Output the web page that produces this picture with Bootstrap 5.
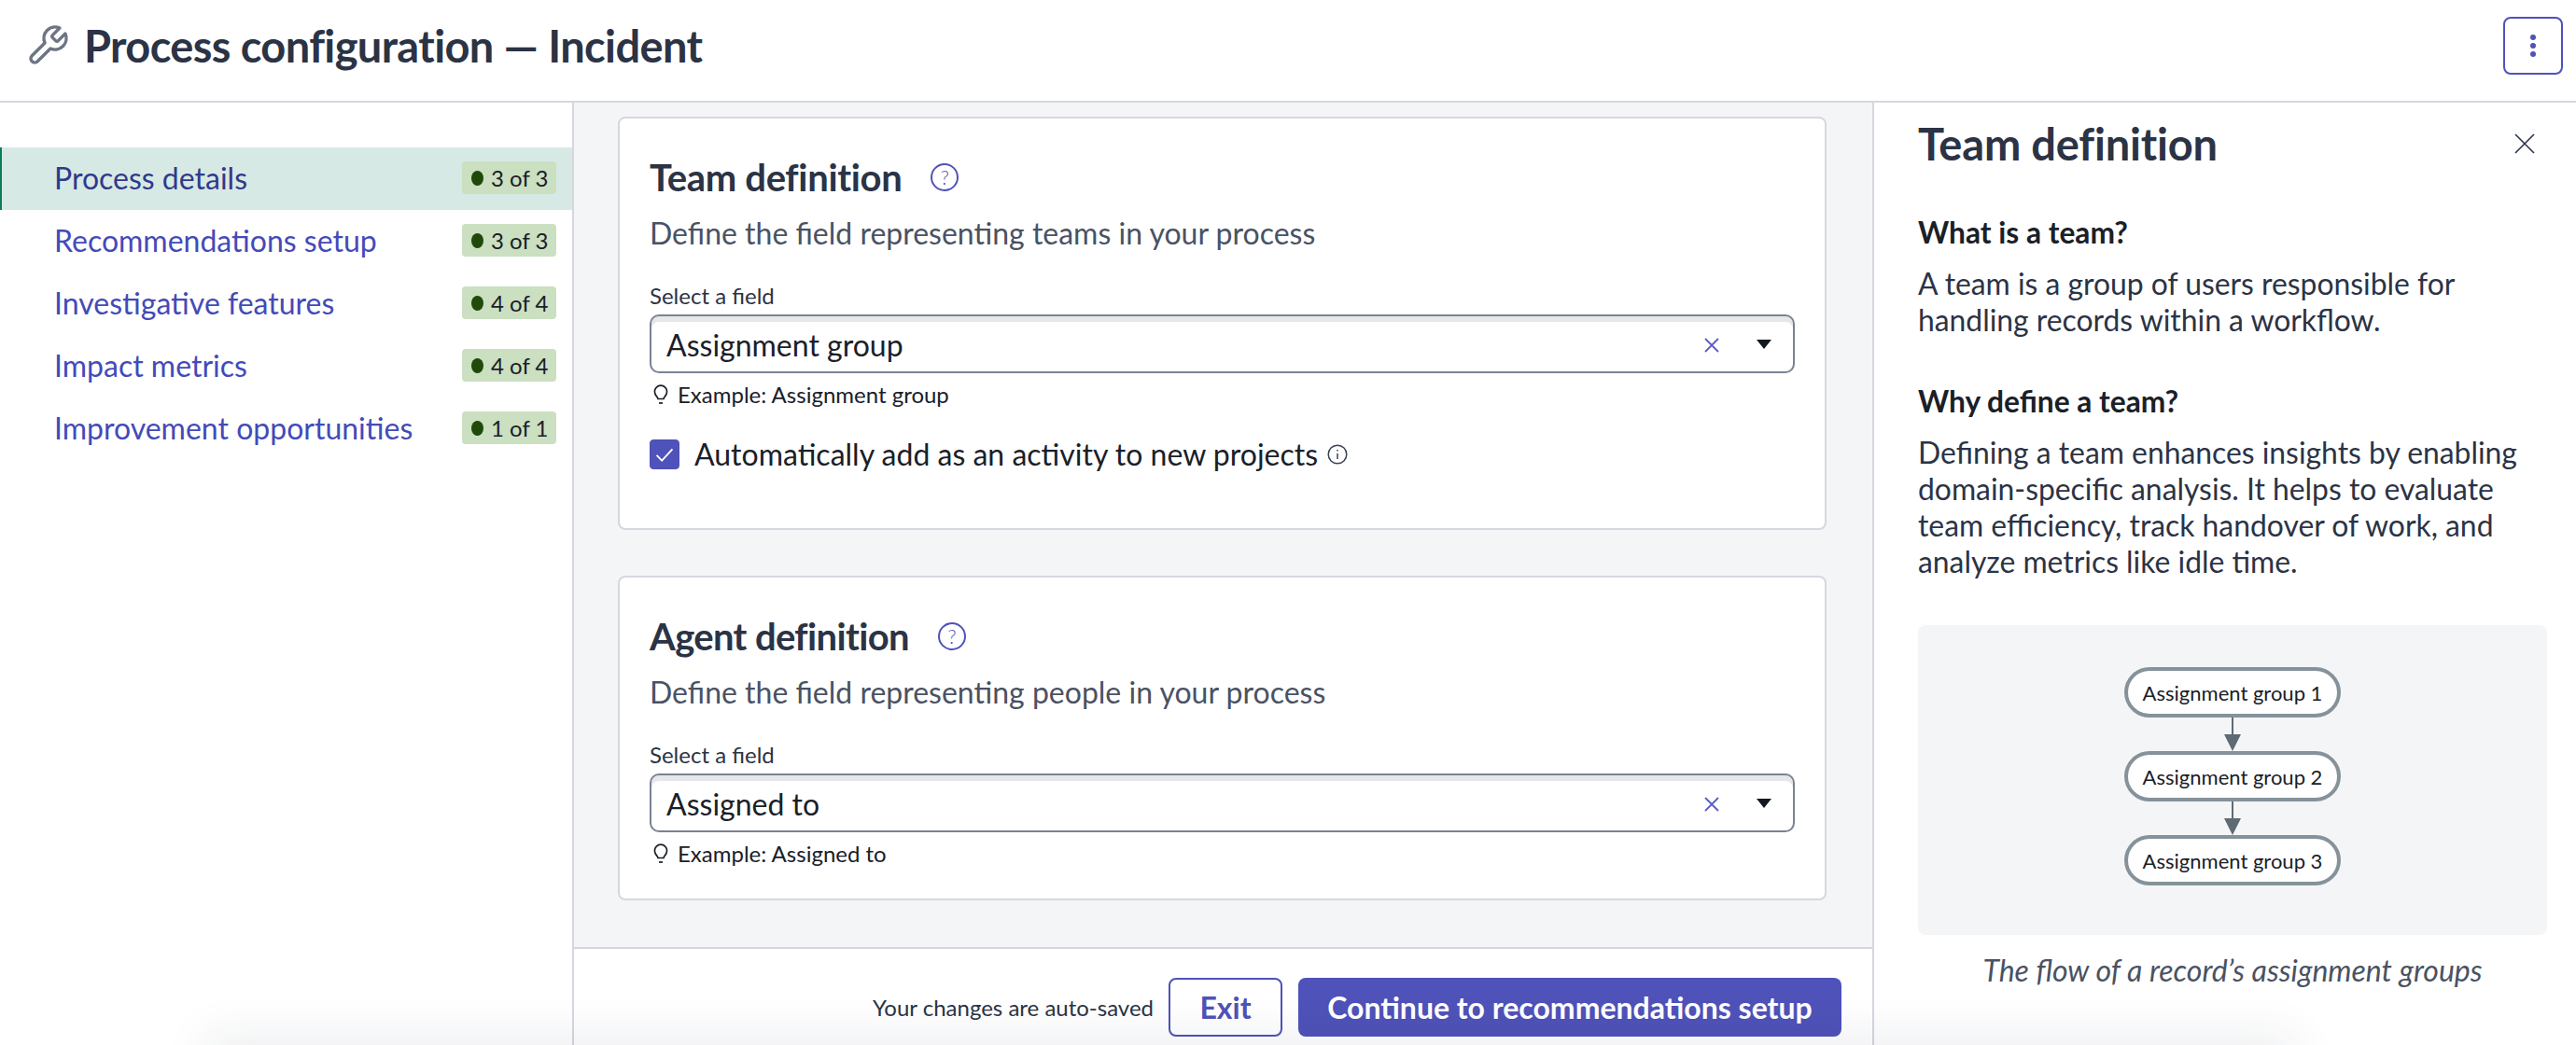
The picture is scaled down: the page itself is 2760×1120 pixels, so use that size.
<!DOCTYPE html>
<html lang="en">
<head>
    <meta charset="UTF-8">
    <title>Process configuration — Incident</title>
    <link href="https://cdn.jsdelivr.net/npm/bootstrap@5.3.3/dist/css/bootstrap.min.css" rel="stylesheet">
    <style>
        body { font-family: Lato, "Liberation Sans", sans-serif; color: #1a2028; overflow: hidden; }
        .app { height: 1120px; position: relative; overflow: hidden; }
        .app::after { content: ""; position: absolute; left: 230px; right: 310px; bottom: -30px; height: 30px; box-shadow: 0 0 50px 10px rgba(30,40,60,.08); }

        .top-bar { height: 110px; border-bottom: 2px solid #d6d7df; padding: 0 14px 10px 27px; }
        .top-bar h1 { font-size: 47px; font-weight: 700; color: #2b3345; margin: 0 0 0 15px; letter-spacing: -.62px; }
        .kebab { width: 64px; height: 62px; border: 2px solid #4f52b8; border-radius: 8px; padding: 0; }

        .side { width: 615px; border-right: 2px solid #d6d7df; padding-top: 48px; }
        .side .list-group-item { border: 0; border-radius: 0; height: 67px; padding: 0 17px 2px 56px; font-size: 32px; color: #444ab8; background: transparent; border-left: 2px solid transparent; }
        .side .list-group-item.active { background: #d7e9e4; border-left-color: #0b7d5e; color: #2f3a8c; margin: 0; }
        .step-badge { background: #cbdfc1; color: #1a2028; font-size: 24px; font-weight: 400; border-radius: 4px; padding: 0 8px 0 10px; height: 35px; width: 101px; gap: 8px; }
        .step-badge i { width: 13px; height: 16px; background: #1f4a0a; border-radius: 50%; }

        .main { background: #f4f5f7; }
        .main-scroll { padding: 15px 49px 0 47px; }
        .def-card { border: 2px solid #d6d7df; border-radius: 8px; margin-bottom: 49px; }
        .def-card .card-body { padding: 36px 32px 32px 32px; }
        .def-card h2 { font-size: 40px; font-weight: 700; color: #2b3345; margin: 0; line-height: 54px; letter-spacing: -.35px; }
        .def-card.agent h2 { letter-spacing: -.65px; }
        .help { width: 30px; height: 30px; border: 2px solid #4f52b8; border-radius: 50%; color: #4f52b8; font-size: 21px; font-weight: 300; margin-left: 31px; }
        .def-card .sub { font-size: 32px; line-height: 44px; color: #4a5263; margin: 11px 0 29px; }
        .def-card label { font-size: 24px; line-height: 32px; margin: 0 0 4px; color: #2b3345; }
        .picker { height: 63px; border: 2px solid #7a8294; border-radius: 10px; box-shadow: inset 0 6px 0 #e5e7e8; padding: 2px 22px 0 16px; font-size: 32px; color: #1a2028; }
        .picker .caret { margin-left: 38px; }
        .hint { font-size: 24px; line-height: 32px; margin-top: 7px; gap: 10px; padding-left: 4px; color: #1a2028; }
        .auto-check { margin: 32px 0 31px; gap: 16px; font-size: 32px; line-height: 32px; }
        .auto-check .form-check-input { width: 32px; height: 32px; margin: 0; background-color: #4f52b8; border-color: #4f52b8; border-radius: 4px; float: none; background-size: 100% 100%; background-image: url("data:image/svg+xml,%3Csvg xmlns='http://www.w3.org/2000/svg' viewBox='0 0 32 32'%3E%3Cpath fill='none' stroke='%23fff' stroke-width='2' d='M7 17l6 6L25 10'/%3E%3C/svg%3E"); }
        .auto-check .form-check-label { font-size: 32px; margin: 0; color: #1a2028; line-height: 32px; }
        .auto-check .info-icon { margin-left: -6px; }

        .foot { height: 105px; border-top: 2px solid #d6d7df; padding: 22px 33px 0 0; background: #fff; gap: 17px; }
        .foot .saved { font-size: 24px; color: #2b3345; margin-right: -1px; }
        .foot .btn { height: 63px; font-size: 32px; font-weight: 700; border-radius: 8px; padding: 0; }
        .btn-exit { width: 122px; border: 2px solid #4f52b8; color: #4f52b8; background: #fff; }
        .btn-next { width: 582px; background: #4f52b8; border: 0; color: #fff; }

        .help-panel { width: 754px; border-left: 2px solid #d6d7df; padding: 12px 31px 0 47px; }
        .help-panel h2 { font-size: 47px; font-weight: 700; line-height: 64px; color: #2b3345; margin: 0; letter-spacing: -.2px; }
        .help-panel .close-x { margin-right: 13px; }
        .help-panel h3 { font-size: 31.7px; font-weight: 700; line-height: 39px; color: #1a2028; margin: 0 0 16px; }
        .help-panel h3.first { margin-top: 44px; }
        .help-panel p { font-size: 31.85px; line-height: 38.7px; color: #2b3345; margin: 0 0 49px; }
        .flow { background: #f4f5f7; border-radius: 8px; height: 332px; padding-bottom: 8px; }
        .flow .pill { width: 232px; height: 54px; border: 4px solid #85929a; border-radius: 27px; background: #fff; font-size: 22px; color: #1a2028; }
        .caption { font-size: 32px; font-style: italic; color: #4a5263; text-align: center; margin-top: 14px; }
    </style>
</head>
<body>

<div class="app d-flex flex-column">
    <header class="top-bar d-flex align-items-center flex-shrink-0">
        <svg width="48" height="48" viewBox="0 0 24 24" fill="none" stroke="#6c7585" stroke-width="1.7" stroke-linecap="round" stroke-linejoin="round"><path d="M14.7 6.3a1 1 0 0 0 0 1.4l1.6 1.6a1 1 0 0 0 1.4 0l3.77-3.77a6 6 0 0 1-7.94 7.94l-6.91 6.91a2.12 2.12 0 0 1-3-3l6.91-6.91a6 6 0 0 1 7.94-7.94l-3.76 3.76z"/></svg>
        <h1>Process configuration — Incident</h1>
        <button class="btn kebab ms-auto d-flex align-items-center justify-content-center" type="button" aria-label="More">
            <svg width="8" height="26" viewBox="0 0 8 26" fill="#4f52b8"><circle cx="4" cy="4" r="3"/><circle cx="4" cy="13" r="3"/><circle cx="4" cy="22" r="3"/></svg>
        </button>
    </header>

    <div class="d-flex flex-grow-1">
        <nav class="side flex-shrink-0">
            <div class="list-group">
                <a href="#" class="list-group-item active d-flex align-items-center justify-content-between">Process details <span class="badge step-badge d-flex align-items-center"><i></i>3 of 3</span></a>
                <a href="#" class="list-group-item d-flex align-items-center justify-content-between">Recommendations setup <span class="badge step-badge d-flex align-items-center"><i></i>3 of 3</span></a>
                <a href="#" class="list-group-item d-flex align-items-center justify-content-between">Investigative features <span class="badge step-badge d-flex align-items-center"><i></i>4 of 4</span></a>
                <a href="#" class="list-group-item d-flex align-items-center justify-content-between">Impact metrics <span class="badge step-badge d-flex align-items-center"><i></i>4 of 4</span></a>
                <a href="#" class="list-group-item d-flex align-items-center justify-content-between">Improvement opportunities <span class="badge step-badge d-flex align-items-center"><i></i>1 of 1</span></a>
            </div>
        </nav>

        <main class="main flex-grow-1 d-flex flex-column">
            <div class="main-scroll flex-grow-1">
                <section class="card def-card">
                    <div class="card-body">
                        <div class="d-flex align-items-center">
                            <h2>Team definition</h2>
                            <span class="help d-flex align-items-center justify-content-center">?</span>
                        </div>
                        <p class="sub">Define the field representing teams in your process</p>
                        <label class="form-label d-block">Select a field</label>
                        <div class="picker d-flex align-items-center">
                            <span class="flex-grow-1">Assignment group</span>
                            <svg width="18" height="18" viewBox="0 0 18 18" stroke="#5a5ec4" stroke-width="1.8"><path d="M2 2l14 14M16 2L2 16"/></svg>
                            <svg class="caret" width="18" height="11" viewBox="0 0 18 11" fill="#14191f"><path d="M1 0h16L9 10z"/></svg>
                        </div>
                        <div class="hint d-flex align-items-center">
                            <svg width="16" height="22" viewBox="0 0 16 22" fill="none" stroke="#1a2028" stroke-width="1.7"><path d="M5 15.5c0-2-3.6-3.4-3.6-7.7a6.6 6.6 0 0 1 13.2 0c0 4.3-3.6 5.7-3.6 7.7z"/><path d="M6 20h4"/></svg>
                            <span>Example: Assignment group</span>
                        </div>
                        <div class="form-check auto-check d-flex align-items-center p-0">
                            <input class="form-check-input" type="checkbox" id="autoAdd" checked>
                            <label class="form-check-label" for="autoAdd">Automatically add as an activity to new projects</label>
                            <svg class="info-icon" width="22" height="22" viewBox="0 0 22 22" fill="none" stroke="#3a4252" stroke-width="1.5"><circle cx="11" cy="11" r="9.8"/><path d="M11 10v6"/><path d="M11 6v1.6"/></svg>
                        </div>
                    </div>
                </section>

                <section class="card def-card agent mb-0">
                    <div class="card-body">
                        <div class="d-flex align-items-center">
                            <h2>Agent definition</h2>
                            <span class="help d-flex align-items-center justify-content-center">?</span>
                        </div>
                        <p class="sub">Define the field representing people in your process</p>
                        <label class="form-label d-block">Select a field</label>
                        <div class="picker d-flex align-items-center">
                            <span class="flex-grow-1">Assigned to</span>
                            <svg width="18" height="18" viewBox="0 0 18 18" stroke="#5a5ec4" stroke-width="1.8"><path d="M2 2l14 14M16 2L2 16"/></svg>
                            <svg class="caret" width="18" height="11" viewBox="0 0 18 11" fill="#14191f"><path d="M1 0h16L9 10z"/></svg>
                        </div>
                        <div class="hint d-flex align-items-center">
                            <svg width="16" height="22" viewBox="0 0 16 22" fill="none" stroke="#1a2028" stroke-width="1.7"><path d="M5 15.5c0-2-3.6-3.4-3.6-7.7a6.6 6.6 0 0 1 13.2 0c0 4.3-3.6 5.7-3.6 7.7z"/><path d="M6 20h4"/></svg>
                            <span>Example: Assigned to</span>
                        </div>
                    </div>
                </section>
            </div>

            <footer class="foot d-flex align-items-center justify-content-end flex-shrink-0">
                <span class="saved">Your changes are auto-saved</span>
                <button class="btn btn-exit" type="button">Exit</button>
                <button class="btn btn-next" type="button">Continue to recommendations setup</button>
            </footer>
        </main>

        <aside class="help-panel flex-shrink-0">
            <div class="d-flex align-items-center justify-content-between">
                <h2>Team definition</h2>
                <svg class="close-x" width="22" height="22" viewBox="0 0 22 22" stroke="#2b3345" stroke-width="1.6"><path d="M1 1l20 20M21 1L1 21"/></svg>
            </div>
            <h3 class="first">What is a team?</h3>
            <p>A team is a group of users responsible for handling records within a workflow.</p>
            <h3>Why define a team?</h3>
            <p>Defining a team enhances insights by enabling domain-specific analysis. It helps to evaluate team efficiency, track handover of work, and analyze metrics like idle time.</p>
            <div class="flow d-flex flex-column align-items-center justify-content-center">
                <div class="pill d-flex align-items-center justify-content-center">Assignment group 1</div>
                <svg width="20" height="36" viewBox="0 0 20 36" fill="#5e6b74"><path d="M9 0h2v18H9z"/><path d="M1 18h18l-9 18z"/></svg>
                <div class="pill d-flex align-items-center justify-content-center">Assignment group 2</div>
                <svg width="20" height="36" viewBox="0 0 20 36" fill="#5e6b74"><path d="M9 0h2v18H9z"/><path d="M1 18h18l-9 18z"/></svg>
                <div class="pill d-flex align-items-center justify-content-center">Assignment group 3</div>
            </div>
            <div class="caption">The flow of a record’s assignment groups</div>
        </aside>
    </div>
</div>

<script src="https://cdn.jsdelivr.net/npm/bootstrap@5.3.3/dist/js/bootstrap.bundle.min.js"></script>
</body>
</html>
